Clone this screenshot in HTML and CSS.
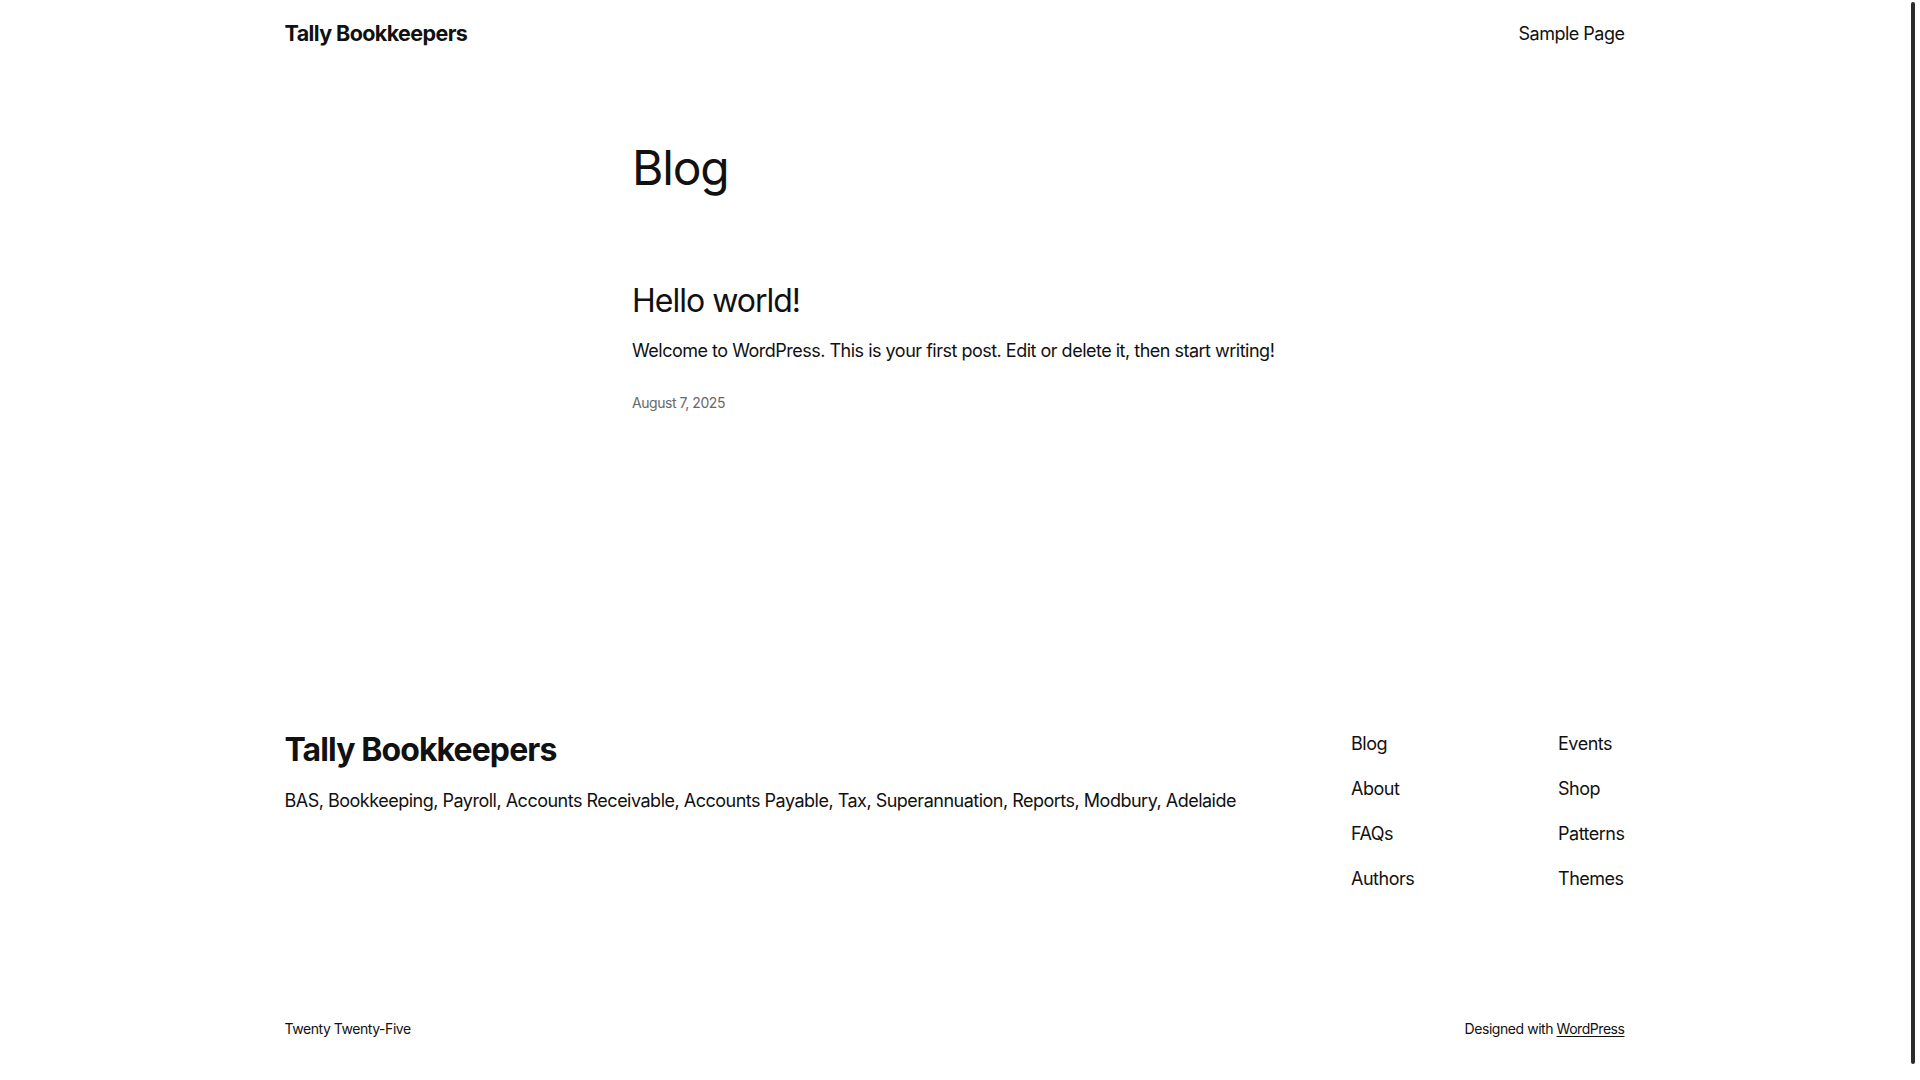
FILE: index.html
```html
<!DOCTYPE html>
<html lang="en">
<head>
<meta charset="utf-8">
<title>Blog – Tally Bookkeepers</title>
<link rel="stylesheet" href="styles.css">
</head>
<body>
<div class="wrap">
  <header class="site-header">
    <a class="site-title" href="#">Tally Bookkeepers</a>
    <nav class="top-nav"><a href="#">Sample Page</a></nav>
  </header>

  <main class="main">
    <div class="content">
      <h1 class="page-title">Blog</h1>
      <article class="post">
        <h2 class="post-title"><a href="#">Hello world!</a></h2>
        <p class="excerpt">Welcome to WordPress. This is your first post. Edit or delete it, then start writing!</p>
        <div class="post-date">August 7, 2025</div>
      </article>
    </div>
  </main>

  <footer class="site-footer">
    <div class="footer-top">
      <div class="footer-brand">
        <a class="footer-title" href="#">Tally Bookkeepers</a>
        <p class="tagline">BAS, Bookkeeping, Payroll, Accounts Receivable, Accounts Payable, Tax, Superannuation, Reports, Modbury, Adelaide</p>
      </div>
      <nav class="footer-nav">
        <ul class="nav-col first">
          <li><a href="#">Blog</a></li>
          <li><a href="#">About</a></li>
          <li><a href="#">FAQs</a></li>
          <li><a href="#">Authors</a></li>
        </ul>
        <ul class="nav-col">
          <li><a href="#">Events</a></li>
          <li><a href="#">Shop</a></li>
          <li><a href="#">Patterns</a></li>
          <li><a href="#">Themes</a></li>
        </ul>
      </nav>
    </div>
    <div class="footer-bottom">
      <span>Twenty Twenty-Five</span>
      <span>Designed with <a class="wp" href="#">WordPress</a></span>
    </div>
  </footer>
</div>
<div class="scroll-thumb"></div>
</body>
</html>
```

FILE: styles.css
```css
html, body {
  margin: 0;
  padding: 0;
  background: #ffffff;
}
body {
  padding-right: 11px;
  font-family: Inter, "Noto Sans", "DejaVu Sans", sans-serif;
  color: #111111;
  font-size: 18px;
  line-height: 1.6;
  letter-spacing: -0.5px;
}
a {
  color: inherit;
  text-decoration: none;
}
.wrap {
  width: 1340px;
  margin: 0 auto;
  padding-bottom: 30px;
}
.site-header {
  height: 68px;
  display: flex;
  align-items: center;
  justify-content: space-between;
}
.site-title {
  font-size: 21.5px;
  font-weight: 700;
  letter-spacing: -0.6px;
  line-height: 1.2;
}
.top-nav a {
  font-size: 18px;
  line-height: 1.6;
}
.main {
  padding-top: 73px;
}
.content {
  width: 645px;
  margin: 0 auto;
}
.page-title {
  margin: 0;
  font-size: 48px;
  font-weight: 400;
  line-height: 1.125;
  letter-spacing: -1.2px;
}
.post {
  margin-top: 88px;
}
.post-title {
  margin: 0;
  font-size: 32px;
  font-weight: 400;
  line-height: 1.125;
  letter-spacing: -1px;
}
.excerpt {
  margin: 18px 0 0;
  font-size: 18px;
  line-height: 1.6;
  white-space: nowrap;
}
.post-date {
  margin-top: 27px;
  font-size: 14px;
  line-height: 1.4;
  color: #686868;
  letter-spacing: -0.45px;
}
.site-footer {
  margin-top: 318px;
}
.footer-top {
  display: flex;
  justify-content: space-between;
  align-items: flex-start;
}
.footer-title {
  display: block;
  font-size: 32px;
  font-weight: 700;
  line-height: 1.2;
  letter-spacing: -0.9px;
  padding-top: 1px;
}
.tagline {
  margin: 17px 0 0;
  font-size: 18px;
  line-height: 1.6;
}
.footer-nav {
  display: flex;
}
.nav-col {
  list-style: none;
  margin: 0;
  padding: 0;
  display: flex;
  flex-direction: column;
  gap: 16px;
}
.nav-col.first {
  width: 207px;
}
.nav-col li {
  font-size: 18px;
  line-height: 1.6;
}
.footer-bottom {
  margin-top: 125px;
  display: flex;
  justify-content: space-between;
  font-size: 14px;
  line-height: 1.4;
  letter-spacing: -0.45px;
}
.wp {
  text-decoration: underline;
  text-underline-offset: 2px;
}
.scroll-thumb {
  position: fixed;
  top: 2px;
  right: 5px;
  width: 4px;
  height: 1062px;
  border-radius: 2px;
  background: #2b2b2b;
}
```
